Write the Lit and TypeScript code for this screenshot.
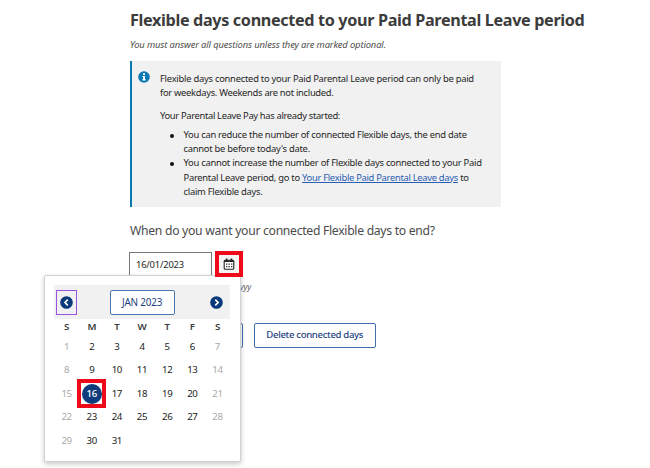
import { LitElement, html, css, svg } from "lit";
import { customElement, property } from "lit/decorators.js";
import { classMap } from "lit/directives/class-map.js";

@customElement("date-picker")
class DatePicker extends LitElement {
  @property() month = "JAN 2023";
  @property({ type: Number }) days = 31;
  @property({ type: Number }) selected = 16;

  static styles = css`
    :host {
      display: block;
      box-sizing: border-box;
      width: 197px;
      height: 187px;
      padding: 9px 10px;
      background: #fff;
      border: 1px solid #d2d2d2;
      border-radius: 2px;
      box-shadow: 0 2px 5px rgba(0, 0, 0, 0.22);
      font: 9.7px/12px "Noto Sans", "Open Sans", sans-serif;
      letter-spacing: -0.4px;
      color: #222;
    }
    .bar {
      height: 34px;
      width: 176px;
      margin-left: -1px;
      background: #f1f1f1;
      display: flex;
      align-items: center;
      justify-content: space-between;
    }
    .nav {
      box-sizing: border-box;
      width: 21px;
      height: 25px;
      margin: 0 3px 0 2px;
      display: flex;
      align-items: center;
      justify-content: center;
    }
    .focus {
      border: 1px solid #9a55e0;
    }
    .nav svg {
      width: 13px;
      height: 13px;
      display: block;
    }
    .month {
      box-sizing: border-box;
      width: 65px;
      height: 25px;
      border: 1px solid #4a77b4;
      border-radius: 2px;
      background: #fff;
      color: #1d3f7d;
      font-size: 9.9px;
      line-height: 23px;
      letter-spacing: -0.18px;
      text-align: center;
    }
    .grid {
      width: 176px;
      margin-left: -1px;
      display: grid;
      grid-template-columns: repeat(7, 1fr);
      grid-template-rows: 16px repeat(5, 23.5px);
      align-items: center;
      justify-items: center;
    }
    .head {
      font-weight: 600;
      color: #3a3a3a;
    }
    .off {
      color: #a9a9a9;
    }
    .on {
      box-sizing: border-box;
      width: 29px;
      height: 29px;
      margin: -3px;
      border: 4px solid #ee0a18;
      background: #fff;
      display: flex;
      align-items: center;
      justify-content: center;
    }
    .on b {
      width: 20px;
      height: 20px;
      border-radius: 50%;
      background: #0f3c7c;
      color: #fff;
      font-weight: 500;
      line-height: 20px;
      text-align: center;
    }
  `;

  private arrow(d: string) {
    return html`<svg viewBox="0 0 13 13">
      ${svg`<circle cx="6.5" cy="6.5" r="6.3" fill="#0b3a7c"></circle>
      <path d=${d} fill="none" stroke="#fff" stroke-width="1.7"></path>`}
    </svg>`;
  }

  render() {
    const days = Array.from({ length: this.days }, (_, i) => i + 1);
    return html`
      <div class="bar">
        <span class="nav focus">${this.arrow("M7.8 3.6 5 6.5 7.8 9.4")}</span>
        <span class="month">${this.month}</span>
        <span class="nav">${this.arrow("M5.3 3.6 8.1 6.5 5.3 9.4")}</span>
      </div>
      <div class="grid">
        ${["S", "M", "T", "W", "T", "F", "S"].map((d) => html`<span class="head">${d}</span>`)}
        ${days.map((d) =>
          d === this.selected
            ? html`<span class="on"><b>${d}</b></span>`
            : html`<span class=${classMap({ off: d % 7 < 2 })}>${d}</span>`
        )}
      </div>
    `;
  }
}

@customElement("app-root")
class AppRoot extends LitElement {
  static styles = css`
    :host {
      display: block;
      position: relative;
      box-sizing: border-box;
      width: 650px;
      height: 468px;
      padding: 9px 0 0 130px;
      overflow: hidden;
      background: #fff;
      color: #262626;
      font: 9.4px/14.2px "Noto Sans", "Open Sans", sans-serif;
      white-space: nowrap;
    }
    h1 {
      margin: 0;
      font-size: 16.2px;
      line-height: 22px;
      letter-spacing: -0.345px;
      color: #3c3c3c;
    }
    .note {
      margin: 7px 0 9px;
      font-style: italic;
      letter-spacing: -0.125px;
      color: #4d4d4d;
    }
    .info {
      box-sizing: border-box;
      width: 370.5px;
      height: 146px;
      padding: 10px 0 0 6px;
      display: flex;
      gap: 12px;
      background: #f1f1f1;
      border-left: 2px solid #0a78b0;
    }
    .info > svg {
      width: 12px;
      height: 12px;
    }
    p {
      margin: 0 0 8.6px;
    }
    .text {
      letter-spacing: -0.265px;
      margin: 0.6px 0 0 -2px;
    }
    .l1 { letter-spacing: -0.25px; }
    .l2 { letter-spacing: -0.3px; }
    .l3 { letter-spacing: -0.335px; }
    .l4 { letter-spacing: -0.25px; }
    .link {
      letter-spacing: -0.3px;
      color: #2a5db4;
      text-decoration: underline;
    }
    p.lead {
      margin-bottom: 5px;
    }
    ul {
      margin: 0;
      padding: 0;
      list-style: none;
    }
    li {
      display: flex;
    }
    li::before {
      content: "";
      width: 4px;
      height: 4px;
      margin: 5.5px 9.5px 0 10px;
      border-radius: 50%;
      background: #111;
    }
    .question {
      margin: 15px 0 12px;
      font-size: 12.2px;
      line-height: 18px;
      letter-spacing: -0.3px;
      color: #4b4b4b;
    }
    .row {
      display: flex;
      gap: 3px;
      margin-left: -1px;
    }
    .field {
      box-sizing: border-box;
      width: 83px;
      height: 26px;
      padding-left: 6px;
      border: 1px solid #777;
      line-height: 24px;
      letter-spacing: -0.2px;
    }
    .cal {
      position: relative;
      z-index: 2;
      box-sizing: border-box;
      width: 28px;
      height: 26px;
      margin-top: -1px;
      border: 4px solid #ee0a18;
      background: #f4f4f4;
      display: flex;
      align-items: center;
      justify-content: center;
    }
    .cal svg {
      width: 12px;
      height: 12px;
    }
    .hint {
      width: 121px;
      margin-top: 2px;
      font-size: 8.6px;
      font-style: italic;
      letter-spacing: -0.3px;
      text-align: right;
      color: #666;
    }
    .actions {
      display: flex;
      gap: 11px;
      margin-top: 29px;
    }
    .btn {
      box-sizing: border-box;
      width: 121.5px;
      height: 25px;
      border: 1px solid #3f6dae;
      border-radius: 2px;
      color: #1f4483;
      font-weight: 500;
      font-size: 9.6px;
      line-height: 22px;
      letter-spacing: -0.34px;
      text-align: center;
    }
    .save {
      width: 113px;
    }
    date-picker {
      position: absolute;
      left: 44px;
      top: 275px;
      z-index: 1;
    }
  `;

  render() {
    return html`
      <h1>Flexible days connected to your Paid Parental Leave period</h1>
      <div class="note">You must answer all questions unless they are marked optional.</div>
      <div class="info">
        <svg viewBox="0 0 12 12">
          <circle cx="6" cy="6" r="5.8" fill="#0a78b4"></circle>
          <path d="M5.1 2.2h1.9v1.7H5.1zM4.4 4.9H7v3.3h.7v1.2H4.4V8.2h.7V6.1h-.7z" fill="#fff"></path>
        </svg>
        <div class="text">
          <p>
            <span class="l1">Flexible days connected to your Paid Parental Leave period can only be paid</span><br />
            <span class="l2">for weekdays. Weekends are not included.</span>
          </p>
          <p class="lead"><span class="l3">Your Parental Leave Pay has already started:</span></p>
          <ul>
            <li>
              <div>
                You can reduce the number of connected Flexible days, the end date<br />
                <span class="l4">cannot be before today's date.</span>
              </div>
            </li>
            <li>
              <div>
                You cannot increase the number of Flexible days connected to your Paid<br />
                Parental Leave period, go to <span class="link">Your Flexible Paid Parental Leave days</span> to<br />
                claim Flexible days.
              </div>
            </li>
          </ul>
        </div>
      </div>
      <div class="question">When do you want your connected Flexible days to end?</div>
      <div class="row">
        <div class="field">16/01/2023</div>
        <div class="cal">
          <svg viewBox="0 0 12 12">
            <rect x="1.2" y="2.2" width="9.6" height="9" rx="1" fill="#fff" stroke="#222" stroke-width="1.1"></rect>
            <path d="M1.2 3.2h9.6M3.6.4v2.4M8.4.4v2.4" stroke="#222" stroke-width="1.6"></path>
            <path d="M3 6.1h6.4M3 8.7h6.4" stroke="#333" stroke-width="1.3" stroke-dasharray="1.4 1.1"></path>
          </svg>
        </div>
      </div>
      <div class="hint">yyy</div>
      <div class="actions">
        <div class="btn save"></div>
        <div class="btn">Delete connected days</div>
      </div>
      <date-picker></date-picker>
    `;
  }
}
